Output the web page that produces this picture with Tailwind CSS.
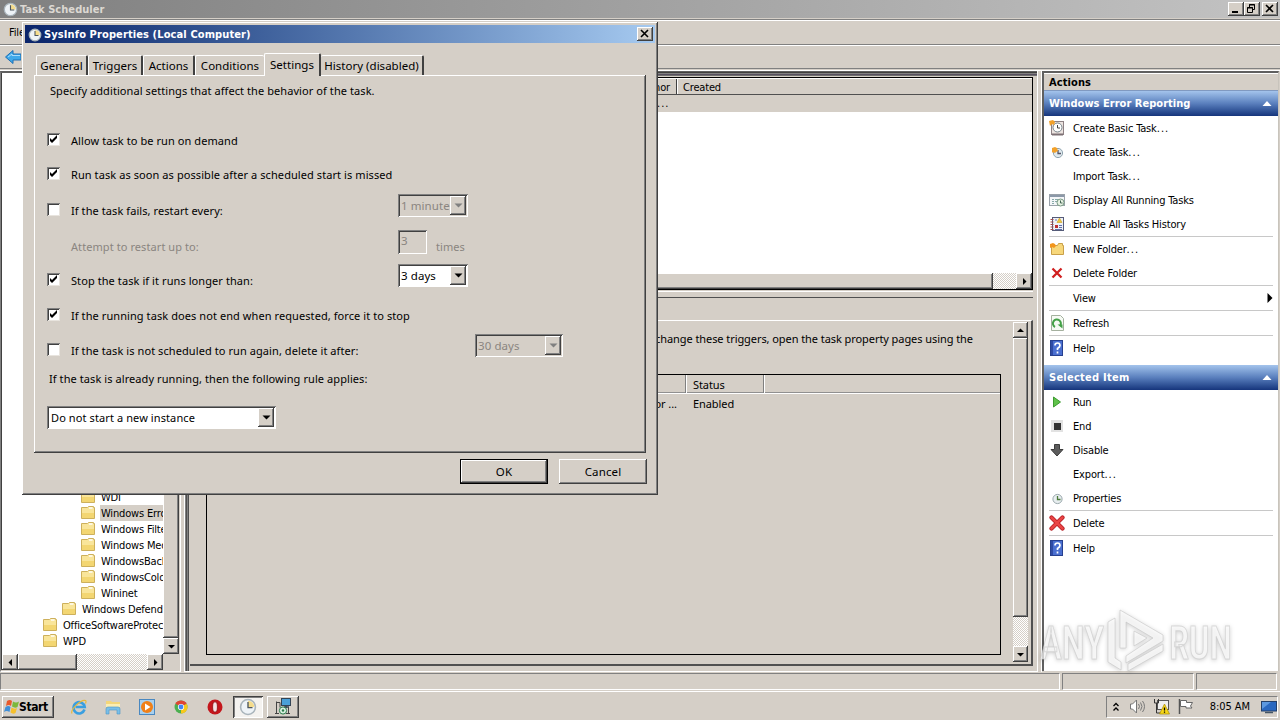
<!DOCTYPE html>
<html lang="en">
<head>
    <meta charset="UTF-8">
    <meta name="viewport" content="width=device-width, initial-scale=1.0">
    <title>Task Scheduler</title>
    <script src="https://cdn.jsdelivr.net/npm/@tailwindcss/browser@4"></script>
</head>
<body class="w-[1280px] h-[720px] overflow-hidden bg-[#d5cfc7] text-black text-[11px] leading-none whitespace-nowrap font-['DejaVu_Sans_Condensed','DejaVu_Sans',sans-serif] font-stretch-condensed tracking-[-0.17px]">
    <div class="relative flex flex-col w-[1280px] h-[720px]">

        <!-- Main window title -->
        <header class="flex items-center h-[18px] shrink-0 pl-[3px] pr-[2px] bg-linear-to-r from-[#808080] to-[#c3c3c3]">
            <span data-icon="clock" class="size-[15px]"></span>
            <h1 class="ml-[2px] font-bold text-[#dcd8d2] tracking-[0.05px]">Task Scheduler</h1>
            <div class="ml-auto flex">
                <button class="w-4 h-[14px] bg-[#d5cfc7] shadow-[inset_-1px_-1px_0_#404040,inset_1px_1px_0_#fff,inset_-2px_-2px_0_#808080]"><svg viewBox="0 0 16 14"><path d="M4 9h6v2H4z"/></svg></button>
                <button class="w-4 h-[14px] bg-[#d5cfc7] shadow-[inset_-1px_-1px_0_#404040,inset_1px_1px_0_#fff,inset_-2px_-2px_0_#808080]"><svg viewBox="0 0 16 14" fill="none" stroke="#000"><path d="M5.500 5V2.500h5V7.500H9M5 3h6M3.500 5.500h5v5h-5zM3 6h6"/></svg></button>
                <button class="ml-[2px] w-4 h-[14px] bg-[#d5cfc7] shadow-[inset_-1px_-1px_0_#404040,inset_1px_1px_0_#fff,inset_-2px_-2px_0_#808080]"><svg viewBox="0 0 16 14" stroke="#000" stroke-width="1.600"><path d="M4 3l7 7M11 3l-7 7"/></svg></button>
            </div>
        </header>

        <!-- Menu and toolbar -->
        <div class="h-[26px] shrink-0 mt-px border-t border-b border-t-[#808080] border-b-[#808080] shadow-[inset_0_1px_0_#fff]">
            <span class="block pt-[7px] pl-[9px]">File</span>
        </div>
        <div class="h-[23px] shrink-0 border-t border-white pl-[5px] pt-[3px]"><span data-icon="back" class="block size-4"></span></div>
        <div class="h-[3px] shrink-0 border-t border-b border-t-[#808080] border-b-white"></div>

        <main class="flex h-[601px] shrink-0">

            <!-- Task library tree -->
            <section class="flex flex-col w-[181px] border-l border-t-2 border-l-[#808080] border-t-[#606060] border-b border-b-white border-r border-r-white">
                <div class="flex h-[581px] border-l border-[#404040]">
                    <ul id="tree" class="w-[161px] bg-white overflow-hidden flex flex-col justify-end pb-[5px]"></ul>
                    <div class="flex flex-col w-4 bg-[#d5cfc7]">
                        <div class="grow shadow-[inset_-1px_-1px_0_#404040,inset_1px_0_0_#fff,inset_-2px_-2px_0_#808080]"></div>
                        <div class="h-4 grid place-items-center shadow-[inset_-1px_-1px_0_#404040,inset_1px_1px_0_#fff,inset_-2px_-2px_0_#808080]"><span data-icon="down" class="size-[9px]"></span></div>
                    </div>
                </div>
                <div class="flex h-4 border-l border-[#404040]">
                    <div class="w-4 grid place-items-center shadow-[inset_-1px_-1px_0_#404040,inset_1px_1px_0_#fff,inset_-2px_-2px_0_#808080]"><span data-icon="left" class="size-[9px]"></span></div>
                    <div class="w-[59px] shadow-[inset_-1px_-1px_0_#404040,inset_1px_1px_0_#fff,inset_-2px_-2px_0_#808080]"></div>
                    <div class="w-[70px] bg-[conic-gradient(#fff_25%,#d5cfc7_0_50%,#fff_0_75%,#d5cfc7_0)] bg-[length:2px_2px]"></div>
                    <div class="w-4 grid place-items-center shadow-[inset_-1px_-1px_0_#404040,inset_1px_1px_0_#fff,inset_-2px_-2px_0_#808080]"><span data-icon="right" class="size-[9px]"></span></div>
                </div>
            </section>

            <!-- Task list and details -->
            <section class="flex flex-col ml-[3px] w-[854px] border-l border-r border-b border-white shadow-[inset_1px_0_0_#808080,inset_2px_0_0_#505050,inset_3px_0_0_#808080,inset_4px_0_0_#505050,inset_0_1px_0_#606060,inset_0_2px_0_#404040,inset_0_3px_0_#808080,inset_0_4px_0_#585060,inset_0_5px_0_#707070] pl-[5px] pr-[4px]">
                <div class="mt-[6px] h-[213px] shrink-0 flex flex-col bg-white border-t border-r border-b border-black">
                    <div class="flex items-center h-[17px] shrink-0 bg-[#d5cfc7] border-t border-t-white border-b border-b-[#505050] text-[11px]">
                        <div class="w-[487px] h-full pt-[3px] pr-[6px] text-right border-r border-[#404040]">Author</div>
                        <div class="grow h-full pt-[3px] pl-[5px] border-l border-white">Created</div>
                    </div>
                    <div class="h-[17px] shrink-0 bg-[#d5cfc7] pl-[467px] pt-[3px] text-[11px] tracking-[1px]">...</div>
                    <div class="mt-auto flex h-4 bg-[#d5cfc7]">
                        <div class="w-[803px] shadow-[inset_-1px_-1px_0_#404040,inset_1px_1px_0_#fff,inset_-2px_-2px_0_#808080]"></div>
                        <div class="grow bg-[conic-gradient(#fff_25%,#d5cfc7_0_50%,#fff_0_75%,#d5cfc7_0)] bg-[length:2px_2px]"></div>
                        <div class="w-4 grid place-items-center shadow-[inset_-1px_-1px_0_#404040,inset_1px_1px_0_#fff,inset_-2px_-2px_0_#808080]"><span data-icon="right" class="size-[9px]"></span></div>
                    </div>
                </div>
                <div class="h-[7px] shrink-0 border-t border-b border-t-white border-b-[#505050] mt-px"></div>
                <div class="h-[22px] shrink-0"></div>
                <div class="h-[346px] shrink-0 flex border-t border-t-white border-r-2 border-r-[#505050] border-b-2 border-b-[#505050]">
                    <div class="grow pl-[16px] pr-[12px] font-['Noto_Sans',sans-serif] text-[11px] tracking-[-0.07px]">
                        <p class="h-[53px] pt-[12px] pl-[449px]">change these triggers, open the task property pages using the</p>
                        <div class="w-[795px] h-[281px] border border-black">
                            <div class="flex h-[19px] border-b border-white shadow-[inset_0_-1px_0_#909090]">
                                <div class="w-[479px] border-r border-[#808080]"></div>
                                <div class="w-[78px] pt-[4px] pl-[6px] border-l border-r border-l-white border-r-[#808080]">Status</div>
                                <div class="grow border-l border-white"></div>
                            </div>
                            <div class="flex h-[18px] items-center">
                                <div class="w-[470px] text-right">Author ...</div>
                                <div class="pl-[16px]">Enabled</div>
                            </div>
                        </div>
                    </div>
                    <div class="w-4 mt-px mr-[3px] mb-[2px] flex flex-col">
                        <div class="h-4 grid place-items-center shadow-[inset_-1px_-1px_0_#404040,inset_1px_1px_0_#fff,inset_-2px_-2px_0_#808080]"><span data-icon="up" class="size-[9px]"></span></div>
                        <div class="h-[279px] shadow-[inset_-1px_-1px_0_#404040,inset_1px_1px_0_#fff,inset_-2px_-2px_0_#808080]"></div>
                        <div class="grow bg-[conic-gradient(#fff_25%,#d5cfc7_0_50%,#fff_0_75%,#d5cfc7_0)] bg-[length:2px_2px]"></div>
                        <div class="h-4 grid place-items-center shadow-[inset_-1px_-1px_0_#404040,inset_1px_1px_0_#fff,inset_-2px_-2px_0_#808080]"><span data-icon="down" class="size-[9px]"></span></div>
                    </div>
                </div>
            </section>

            <!-- Actions pane -->
            <aside class="ml-[3px] w-[238px] border-l border-white">
                <div class="h-[600px] border-l-2 border-t-2 border-[#606060] border-r border-r-[#c8c4bc] bg-white">
                    <h2 class="h-[17px] bg-[#d5cfc7] pt-[3px] pl-[5px] font-bold text-[11px] border-t border-t-white tracking-[0.1px]">Actions</h2>
                    <div class="flex items-center justify-between h-[26px] pl-[5px] pr-[6px] border-t border-[#8099c0] bg-linear-to-b from-[#a4c4ec] via-[#5a7fbd] to-[#16357c] text-white font-bold tracking-[0.03px]">Windows Error Reporting<span data-icon="collapse" class="size-[10px]"></span></div>
                    <ul id="folderActions" class="h-[249px]"></ul>
                    <div class="flex items-center justify-between h-[25px] pl-[5px] pr-[6px] bg-linear-to-b from-[#a4c4ec] via-[#5a7fbd] to-[#16357c] text-white font-bold tracking-[0.25px]">Selected Item<span data-icon="collapse" class="size-[10px]"></span></div>
                    <ul id="itemActions"></ul>
                </div>
            </aside>
        </main>

        <!-- Status bar -->
        <div class="flex gap-[2px] h-[20px] shrink-0 pt-px pb-px pr-[3px] border-b border-white">
            <div class="w-[1060px] border border-[#808080] border-r-white border-b-white"></div>
            <div class="w-[132px] border border-[#808080] border-r-white border-b-white"></div>
            <div class="grow border border-[#808080] border-r-white border-b-white"></div>
        </div>

        <!-- Taskbar -->
        <footer class="flex items-center grow pl-[2px] pr-[2px] pt-[1px]">
            <button class="flex items-center w-[52px] h-[22px] pl-[2px] shadow-[inset_-1px_-1px_0_#404040,inset_1px_1px_0_#fff,inset_-2px_-2px_0_#808080] font-bold text-[12px] tracking-[-0.4px]"><span data-icon="flag" class="size-4 mr-[-1px]"></span>Start</button>
            <div class="flex ml-[17px] gap-[18px]">
                <span data-icon="ie" class="size-4"></span>
                <span data-icon="explorer" class="size-4"></span>
                <span data-icon="player" class="size-4"></span>
                <span data-icon="chrome" class="size-4"></span>
                <span data-icon="opera" class="size-4"></span>
            </div>
            <button class="ml-[10px] w-[30px] h-[22px] grid place-items-center bg-[#f4f2ef] shadow-[inset_1px_1px_0_#404040,inset_-1px_-1px_0_#fff,inset_2px_2px_0_#808080]"><span data-icon="clock" class="size-[18px]"></span></button>
            <button class="ml-[4px] w-[32px] h-[22px] grid place-items-center shadow-[inset_-1px_-1px_0_#404040,inset_1px_1px_0_#fff,inset_-2px_-2px_0_#808080]"><span data-icon="setup" class="size-[17px]"></span></button>
            <div class="ml-auto flex items-center w-[172px] h-[22px] pl-[5px] border border-[#808080] border-r-white border-b-white">
                <svg class="w-[8px] h-[10px]" viewBox="0 0 8 10" fill="none" stroke="#000" stroke-width="1.300"><path d="M1.500 4L4 1.500 6.500 4M1.500 8.500L4 6 6.500 8.500"/></svg>
                <span data-icon="speaker" class="ml-[9px] size-[17px]"></span>
                <span data-icon="network" class="ml-[7px] size-[17px]"></span>
                <span data-icon="notice" class="ml-[7px] size-[17px]"></span>
                <span class="ml-auto tracking-[-0.05px]">8:05 AM</span>
                <span data-icon="monitor" class="ml-[11px] size-4"></span>
            </div>
        </footer>

        <!-- Properties dialog -->
        <div class="absolute left-[22px] top-[22px] w-[636px] h-[473px] bg-[#d5cfc7] p-[3px] shadow-[inset_-1px_-1px_0_#404040,inset_1px_1px_0_#fff,inset_-2px_-2px_0_#808080] font-['Noto_Sans',sans-serif] tracking-[0.08px]">
            <div class="flex items-center h-[18px] pl-[3px] pr-[2px] bg-linear-to-r from-[#0a246a] to-[#a6caf0] text-white font-bold font-['DejaVu_Sans_Condensed','DejaVu_Sans',sans-serif] font-stretch-condensed tracking-[0.11px]">
                <span data-icon="clock" class="size-[14px] mr-[2px] mt-[2px]"></span>SysInfo Properties (Local Computer)
                <button class="ml-auto w-4 h-[14px] bg-[#d5cfc7] shadow-[inset_-1px_-1px_0_#404040,inset_1px_1px_0_#fff,inset_-2px_-2px_0_#808080]"><svg viewBox="0 0 16 14" stroke="#000" stroke-width="1.600"><path d="M4 3l7 7M11 3l-7 7"/></svg></button>
            </div>
            <nav class="flex items-end h-[33px] mt-[-1px] pl-[11px] text-[11.5px] tracking-[0.02px]">
                <a class="w-[52px] h-[20px] pt-[4px] text-center border-t border-l border-white border-r-2 border-r-[#404040] rounded-t-[2px]">General</a>
                <a class="w-[55px] h-[20px] pt-[4px] text-center border-t border-l border-white border-r-2 border-r-[#404040] rounded-t-[2px]">Triggers</a>
                <a class="w-[52px] h-[20px] pt-[4px] text-center border-t border-l border-white border-r-2 border-r-[#404040] rounded-t-[2px]">Actions</a>
                <a class="w-[69px] h-[20px] pt-[4px] text-center border-t border-l border-white rounded-t-[2px]">Conditions</a>
                <a class="relative z-10 w-[57px] h-[23px] mb-[-1px] pt-[5px] text-center bg-[#d5cfc7] border-t border-l border-white border-r-2 border-r-[#404040] rounded-t-[2px]">Settings</a>
                <a class="w-[103px] h-[20px] pt-[4px] text-center border-t border-white border-r-2 border-r-[#404040] rounded-t-[2px]">History (disabled)</a>
            </nav>
            <div class="ml-[9px] w-[612px] h-[378px] pl-[12px] shadow-[inset_-1px_-1px_0_#404040,inset_1px_1px_0_#fff,inset_-2px_-2px_0_#808080]">
                <p class="h-[48px] pt-[10px] pl-[4px]">Specify additional settings that affect the behavior of the task.</p>
                <div class="flex items-center h-[35px]"><i data-check="on"></i><span class="ml-[11px]">Allow task to be run on demand</span></div>
                <div class="flex items-center h-[34px]"><i data-check="on"></i><span class="ml-[11px] mb-px">Run task as soon as possible after a scheduled start is missed</span></div>
                <div class="flex items-center h-[37px]"><i data-check="off"></i><span class="ml-[11px] w-[327px]">If the task fails, restart every:</span>
                    <div class="flex items-center w-[70px] h-[23px] mb-[10px] pl-[3px] pr-[2px] text-[#8a8580] text-[11.5px] shadow-[inset_1px_1px_0_#808080,inset_-1px_-1px_0_#fff,inset_2px_2px_0_#404040]">1 minute<span data-drop="off" class="ml-auto"></span></div>
                </div>
                <div class="flex items-center h-[35px] text-[#8a8580]"><span class="ml-[25px] w-[327px]">Attempt to restart up to:</span>
                    <div class="w-[29px] h-[24px] mb-[9px] pt-[5px] pl-[3px] text-[11.5px] shadow-[inset_1px_1px_0_#808080,inset_-1px_-1px_0_#fff,inset_2px_2px_0_#404040]">3</div>
                    <span class="ml-[9px]">times</span>
                </div>
                <div class="flex items-center h-[34px]"><i data-check="on"></i><span class="ml-[11px] mb-px w-[327px]">Stop the task if it runs longer than:</span>
                    <div class="flex items-center w-[70px] h-[23px] mb-[11px] pl-[3px] pr-[2px] bg-white text-[11.5px] shadow-[inset_1px_1px_0_#808080,inset_-1px_-1px_0_#fff,inset_2px_2px_0_#404040]">3 days<span data-drop="on" class="ml-auto"></span></div>
                </div>
                <div class="flex items-center h-[35px]"><i data-check="on"></i><span class="ml-[11px]">If the running task does not end when requested, force it to stop</span></div>
                <div class="flex items-center h-[35px]"><i data-check="off"></i><span class="ml-[11px] w-[404px]">If the task is not scheduled to run again, delete it after:</span>
                    <div class="flex items-center w-[88px] h-[23px] mb-[10px] pl-[3px] pr-[2px] text-[#8a8580] text-[11.5px] shadow-[inset_1px_1px_0_#808080,inset_-1px_-1px_0_#fff,inset_2px_2px_0_#404040]">30 days<span data-drop="off" class="ml-auto"></span></div>
                </div>
                <p class="h-[37px] pt-[5px] pl-[3px]">If the task is already running, then the following rule applies:</p>
                <div class="flex items-center w-[229px] h-[23px] mt-[1px] ml-[1px] pl-[4px] pr-[2px] bg-white shadow-[inset_1px_1px_0_#808080,inset_-1px_-1px_0_#fff,inset_2px_2px_0_#404040]"><span class="tracking-[0.1px]">Do not start a new instance</span><span data-drop="on" class="ml-auto"></span></div>
            </div>
            <div class="flex justify-end gap-[11px] mt-[6px] pr-[8px] text-[11.5px] tracking-[0.15px]">
                <button class="w-[88px] h-[25px] border border-black shadow-[inset_-1px_-1px_0_#404040,inset_1px_1px_0_#fff,inset_-2px_-2px_0_#808080]">OK</button>
                <button class="w-[88px] h-[25px] shadow-[inset_-1px_-1px_0_#404040,inset_1px_1px_0_#fff,inset_-2px_-2px_0_#808080]">Cancel</button>
            </div>
        </div>

        <!-- Watermark -->
        <svg class="absolute left-[1036px] top-[606px] w-[204px] h-[68px] drop-shadow-[0_1px_2px_rgba(0,0,0,0.25)]" viewBox="0 0 204 68" fill="#ffffff" fill-opacity="0.700" stroke="#c4c4c4" stroke-opacity="0.600" stroke-width="1" font-family="Roboto" font-weight="500" font-size="47">
            <text x="4" y="53" textLength="64" lengthAdjust="spacingAndGlyphs">ANY</text>
            <text x="133" y="53" textLength="63" lengthAdjust="spacingAndGlyphs">RUN</text>
            <path d="M72 16l7-4v40l6 4v8l-13-8z"/>
            <path fill-rule="evenodd" d="M84 4l43 25v6L90 57V50l27-18-27-16v26h-6z"/>
            <path d="M98 25l13 7-13 8zM92 58l35-20v7L92 65z"/>
        </svg>
    </div>

    <script>
        const icons = {
            clock: '<svg viewBox="0 0 16 16"><circle cx="8" cy="8" r="6.600" fill="#eef3f7" stroke="#a9b4bb" stroke-width="1.400"/><path d="M8 2.500a5.500 5.500 0 0 1 5.500 5.500H8z" fill="#f5dc8c"/><path d="M8 3.500V8.500H12" fill="none" stroke="#4c565e" stroke-width="1.200"/></svg>',
            clockSmall: '<svg viewBox="0 0 16 16"><circle cx="8.500" cy="9" r="4.600" fill="#e8eef0" stroke="#9aa8ac"/><path d="M8.500 6v3.500H11.500" fill="none" stroke="#4c7a3a" stroke-width="1.300"/></svg>',
            back: '<svg viewBox="0 0 16 16"><path d="M0.500 8L8 1.500V5h8v6H8v3.500z" fill="#3fa9ea" stroke="#1c6fb5"/><path d="M3 8l4-3v1.500h8" fill="none" stroke="#a8dcfa"/></svg>',
            down: '<svg viewBox="0 0 9 9"><path d="M1 3h7L4.500 6.500z"/></svg>',
            up: '<svg viewBox="0 0 9 9"><path d="M1 6h7L4.500 2.500z"/></svg>',
            left: '<svg viewBox="0 0 9 9"><path d="M6 1v7L2.500 4.500z"/></svg>',
            right: '<svg viewBox="0 0 9 9"><path d="M3 1v7l3.500-3.500z"/></svg>',
            collapse: '<svg viewBox="0 0 10 10"><path d="M0.500 7h9L5 2z" fill="#fff"/></svg>',
            folder: '<svg viewBox="0 0 16 16"><path d="M1.500 2.500h6l1-1h5v1h1v11h-13z" fill="#f9e59a" stroke="#cdb05c"/><path d="M2 8h12v5H2z" fill="#f3d672"/><path d="M9 3h3.500" stroke="#fff" stroke-width="1.400"/></svg>',
            basicTask: '<svg viewBox="0 0 16 16"><rect x="2.500" y="1.500" width="12" height="13" fill="#ece4e0" stroke="#8e8184"/><circle cx="8.500" cy="7.500" r="4.500" fill="#fff" stroke="#77838a"/><path d="M8.500 5v3H11" fill="none" stroke="#444"/><path d="M0 1l4-1 2 2-1 3-2-1-2 2z" fill="#f2a12a"/><path d="M3 14.500h11" stroke="#7d7074" stroke-width="2"/></svg>',
            newTask: '<svg viewBox="0 0 16 16"><circle cx="9" cy="9" r="4.600" fill="#dfe9ee" stroke="#8fa3ae"/><path d="M9 6v3.500h3" fill="none" stroke="#556" stroke-width="1.300"/><path d="M3 4l3-1 2 1 1 3-2 1-1 1-2-1-1 1z" fill="#f2a12a"/></svg>',
            running: '<svg viewBox="0 0 16 16"><rect x="0.500" y="2.500" width="15" height="11" fill="#f4f6f8" stroke="#9aa2aa"/><path d="M1 4h14" stroke="#8b98a8" stroke-width="2"/><path d="M3 7.500h2M6 7.500h3M3 9.500h2M6 9.500h2M3 11.500h2" stroke="#8aa"/><circle cx="11.500" cy="10.500" r="3.500" fill="#e8f2e4" stroke="#799a84"/><path d="M11.500 8.500v2.500H13.500" fill="none" stroke="#465"/></svg>',
            history: '<svg viewBox="0 0 16 16"><rect x="3.500" y="1.500" width="11" height="13" fill="#eef0f6" stroke="#555b78"/><path d="M1.500 3.500h3M1.500 6h3M1.500 8.500h3M1.500 11h3M1.500 13.500h3" stroke="#a04a4a"/><path d="M10.500 2l2.500 4.500H8z" fill="#f0c83c" stroke="#c8a020" stroke-width=".6"/><path d="M6 9h3v3H6z" fill="#c03030"/><path d="M10 9.500h3M10 11.500h3M6 4h2M6 13.500h7" stroke="#6070a8"/></svg>',
            newFolder: '<svg viewBox="0 0 16 16"><path d="M2.500 4.500h6l1-2h4v2h1v9h-12z" fill="#f7d77a" stroke="#c9a04a"/><path d="M1 3l3-1 2 1 1 2-2 2-2-1-2 1z" fill="#f2951c"/></svg>',
            cross: '<svg viewBox="0 0 16 16" fill="none" stroke="#d01f1f" stroke-width="2.300"><path d="M3.500 3.500l9 9M12.500 3.500l-9 9"/></svg>',
            bigCross: '<svg viewBox="0 0 16 16" fill="none" stroke-linecap="round"><path d="M2.500 2.500l11 11M13.500 2.500l-11 11" stroke="#b61c22" stroke-width="4.200"/><path d="M2.500 2.500l11 11M13.500 2.500l-11 11" stroke="#ea4545" stroke-width="2.500"/></svg>',
            refresh: '<svg viewBox="0 0 16 16"><path d="M2.500 0.500h9l3 3v12h-12z" fill="#f6faf4" stroke="#a4b09e"/><path d="M6 12a4 4 0 1 1 5-1" fill="none" stroke="#43a047" stroke-width="2"/><path d="M8.500 9.500h5v4z" fill="#43a047"/></svg>',
            help: '<svg viewBox="0 0 16 16"><rect x="1.500" y="0.500" width="12" height="15" fill="#4a6fd0" stroke="#27408f"/><path d="M2 1h2v14H2z" fill="#2e4aa4"/><path d="M6 5.500Q6 3 8.500 3T11 5.500Q11 7 8.500 8.500V10M8.500 11.500v2" fill="none" stroke="#fff" stroke-width="1.700"/></svg>',
            run: '<svg viewBox="0 0 16 16"><path d="M4.500 3L11.500 8l-7 5z" fill="#5fc24a" stroke="#3c9a30"/></svg>',
            end: '<svg viewBox="0 0 16 16"><rect x="2" y="2" width="12" height="12" fill="#e2e2e2"/><rect x="5" y="5" width="7" height="7" fill="#333"/></svg>',
            disable: '<svg viewBox="0 0 16 16"><path d="M5.500 2.500h5v5h3.500L8 14 2 7.500h3.500z" fill="#5c5c5c" stroke="#3c3c3c"/></svg>',
            flag: '<svg viewBox="0 0 16 16"><path d="M3 2q3-2 5 0L7 7Q5 5 2 7z" fill="#e8592b"/><path d="M9 2.500q3 2 6 0L13.500 8Q11 9.500 8 7.500z" fill="#7cb83a"/><path d="M1.500 8q3-2 5 0l-1 5q-3-2-5.500 0z" fill="#3f8fd8"/><path d="M7.500 8.500q3 2 5.500 0.500l-1.500 5Q9 15.500 6.500 13.500z" fill="#f6c02c"/></svg>',
            ie: '<svg viewBox="0 0 16 16" fill="none"><path d="M13.500 10.500A5.600 5.600 0 1 1 13.700 8H4.500" stroke="#3a9fe0" stroke-width="2.600"/><path d="M1 14.500C-1 11 10 0 14.500 1.500Q15.500 2 14.500 4.500" stroke="#e8b93a" stroke-width="1.200"/></svg>',
            explorer: '<svg viewBox="0 0 16 16"><path d="M1 2h5l1 1h8v8H1z" fill="#f3d67a"/><path d="M1 5h14v3H1z" fill="#fbeeb4"/><path d="M3 8h10q2 0 2 2v5h-3v-4H4v4H1v-5q0-2 2-2z" fill="#79bfe8" stroke="#4a94c8" stroke-width=".6"/></svg>',
            player: '<svg viewBox="0 0 16 16"><rect x="0.500" y="0.500" width="15" height="15" fill="#a8d0ee" stroke="#4a88c0"/><circle cx="8" cy="8" r="6" fill="#f08018"/><path d="M6 4.500l5.500 3.500L6 11.500z" fill="#fff"/></svg>',
            chrome: '<svg viewBox="0 0 16 16"><circle cx="8" cy="8" r="6.500" fill="#4caf50"/><path d="M2.400 4.700A6.500 6.500 0 0 1 13.600 4.700L8 8z" fill="#e04434"/><path d="M13.600 4.700A6.500 6.500 0 0 1 8 14.500L8 8z" fill="#f8c81c"/><circle cx="8" cy="8" r="3.100" fill="#fff"/><circle cx="8" cy="8" r="2.400" fill="#4285f4"/></svg>',
            opera: '<svg viewBox="0 0 16 16"><circle cx="8" cy="8" r="7.500" fill="#c4161c"/><ellipse cx="8" cy="8" rx="2.400" ry="5.200" fill="#f4e4e4" stroke="#8c0c10" stroke-width=".8"/></svg>',
            setup: '<svg viewBox="0 0 17 17"><rect x="6.500" y="0.500" width="9" height="7" fill="#4aa0d8" stroke="#345"/><path d="M9 9h5M11 8v2" stroke="#345" stroke-width="1.500"/><path d="M1.500 3.500v12M0 15.500H4M13.500 9v7M11 15.500h4M1 4.500h4v5" fill="none" stroke="#444"/><circle cx="8" cy="12.500" r="3.600" fill="#d8f0e0" stroke="#2a7a4a"/><circle cx="8" cy="12.500" r="1.200" fill="#2a7a4a"/></svg>',
            speaker: '<svg viewBox="0 0 17 17" fill="none" stroke="#777"><path d="M1.500 6v5h2l4 4V2l-4 4z" fill="#fff"/><path d="M9.500 6q2 2.500 0 5M11.500 4.500q3 4 0 8M13.500 3q4 5.500 0 11"/></svg>',
            network: '<svg viewBox="0 0 17 17"><rect x="4.500" y="2.500" width="11" height="9" fill="#eee" stroke="#555"/><path d="M1.500 1v4h4V1M3.500 5v10h5" fill="none" stroke="#333"/><path d="M11.500 6l5 10h-10z" fill="#f8d818" stroke="#a88a00" stroke-width=".7"/><path d="M11.500 9.500v3M11.500 13.500v1.200" stroke="#000" stroke-width="1.300"/></svg>',
            notice: '<svg viewBox="0 0 17 17"><path d="M2.500 1v15" stroke="#555" stroke-width="1.500"/><path d="M3.500 2.500h6v2h6l-2 3.500 1.500 2h-6v-1.500H3.500z" fill="#fff" stroke="#666"/></svg>',
            monitor: '<svg viewBox="0 0 16 16"><rect x="0.500" y="2.500" width="15" height="9.500" fill="#2a68c0" stroke="#24406a"/><path d="M1 3h9L1 10z" fill="#5c98e0"/><path d="M4 13.500h8" stroke="#456" stroke-width="1.500"/></svg>'
        };

        const folderActions = [
            ['basicTask', 'Create Basic Task...'],
            ['newTask', 'Create Task...'],
            ['', 'Import Task...'],
            ['running', 'Display All Running Tasks'],
            ['history', 'Enable All Tasks History'],
            null,
            ['newFolder', 'New Folder...'],
            ['cross', 'Delete Folder'],
            null,
            ['', 'View', true],
            null,
            ['refresh', 'Refresh'],
            null,
            ['help', 'Help']
        ];

        const itemActions = [
            ['run', 'Run'],
            ['end', 'End'],
            ['disable', 'Disable'],
            ['', 'Export...'],
            ['clockSmall', 'Properties'],
            null,
            ['bigCross', 'Delete'],
            null,
            ['help', 'Help']
        ];

        const treeItems = [
            ['pl-[78px]', 'WDI'],
            ['pl-[78px]', 'Windows Error Reporting', true],
            ['pl-[78px]', 'Windows Filtering Platform'],
            ['pl-[78px]', 'Windows Media Sharing'],
            ['pl-[78px]', 'WindowsBackup'],
            ['pl-[78px]', 'WindowsColorSystem'],
            ['pl-[78px]', 'Wininet'],
            ['pl-[59px]', 'Windows Defender'],
            ['pl-[40px]', 'OfficeSoftwareProtectionPlatform'],
            ['pl-[40px]', 'WPD']
        ];

        function renderActions(id, rows) {
            document.getElementById(id).innerHTML = rows.map(row => {
                if (!row) return '<li class="h-px ml-[5px] mr-[5px] bg-[#c8c8c8]"></li>';
                const [icon, label, submenu] = row;
                return `
                    <li class="flex items-center h-6 pl-[5px] pr-[5px]">
                        <span class="size-4 mr-2">${icons[icon] || ''}</span>
                        <span>${label.replace('...', '<span class="tracking-[1.1px]">...</span>')}</span>
                        ${submenu ? '<svg class="ml-auto w-[6px] h-[10px]" viewBox="0 0 6 10"><path d="M0.5 0v10l5-5z"/></svg>' : ''}
                    </li>`;
            }).join('');
        }

        renderActions('folderActions', folderActions);
        renderActions('itemActions', itemActions);

        document.getElementById('tree').innerHTML = treeItems.map(([indent, label, selected]) => `
            <li class="flex items-center h-4 shrink-0 ${indent}">
                <span class="size-4 shrink-0 mr-1">${icons.folder}</span>
                <span class="${selected ? 'h-4 pt-[3px] pl-px grow bg-[#d5cfc7]' : 'pl-px'}">${label}</span>
            </li>`).join('');

        document.querySelectorAll('[data-icon]').forEach(el => {
            el.innerHTML = icons[el.dataset.icon];
        });

        document.querySelectorAll('[data-check]').forEach(el => {
            const tick = el.dataset.check === 'on' ? '<svg viewBox="0 0 13 13"><path d="M3 5v3l2 2 5-5V2L5 7z"/></svg>' : '';
            el.outerHTML = `<span class="size-[13px] mb-[3px] ml-[1px] shrink-0 bg-white shadow-[inset_1px_1px_0_#808080,inset_-1px_-1px_0_#e8e4de,inset_2px_2px_0_#404040]">${tick}</span>`;
        });

        document.querySelectorAll('[data-drop]').forEach(el => {
            const color = el.dataset.drop === 'on' ? '#000' : '#808080';
            el.outerHTML = `<span class="ml-auto w-4 h-[19px] grid place-items-center bg-[#d5cfc7] shadow-[inset_-1px_-1px_0_#404040,inset_1px_1px_0_#fff,inset_-2px_-2px_0_#808080]"><svg class="size-[9px]" viewBox="0 0 9 9"><path d="M0.500 2.500h8l-4 4z" fill="${color}"/></svg></span>`;
        });
    </script>
</body>
</html>
